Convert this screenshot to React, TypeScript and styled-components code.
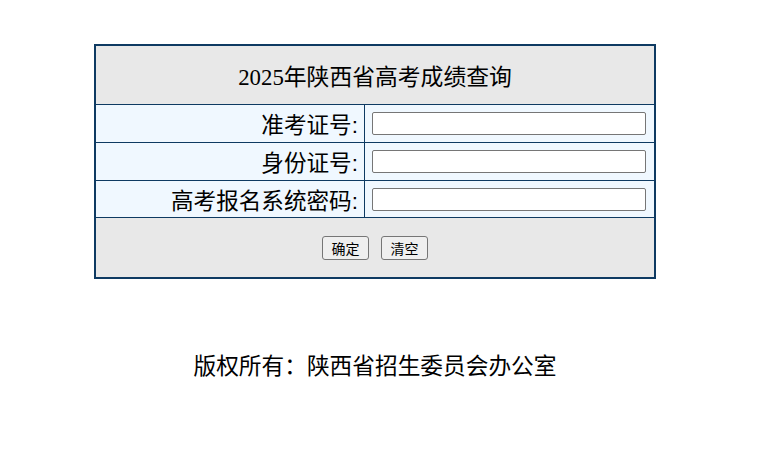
import React from 'react';
import styled, { createGlobalStyle } from 'styled-components';

const GlobalStyle = createGlobalStyle`
  body {
    margin: 0;
    background: #ffffff;
    font-family: "Liberation Sans", "Noto Sans CJK SC", sans-serif;
    color: #000000;
  }
`;

const rows = [
  { label: '准考证号:', name: 'ksh', type: 'text', height: 37 },
  { label: '身份证号:', name: 'sfzh', type: 'text', height: 37 },
  { label: '高考报名系统密码:', name: 'mm', type: 'password', height: 36 },
];

const App = () => {
  return (
    <Page>
      <GlobalStyle />
      <QueryForm onSubmit={(e) => e.preventDefault()}>
        <Title>2025年陕西省高考成绩查询</Title>
        {rows.map((r) => (
          <React.Fragment key={r.name}>
            <Label h={r.height}>{r.label}</Label>
            <Field h={r.height}>
              <Input type={r.type} name={r.name} />
            </Field>
          </React.Fragment>
        ))}
        <Actions>
          <Button type="submit">确定</Button>
          <Button type="reset">清空</Button>
        </Actions>
      </QueryForm>
      <Copyright>版权所有：陕西省招生委员会办公室</Copyright>
    </Page>
  );
};

const Page = styled.div`
  width: 750px;
  padding-top: 44px;
  display: flex;
  flex-direction: column;
  align-items: center;
`;

const QueryForm = styled.form`
  width: 562px;
  box-sizing: border-box;
  border: 2px solid #0e3a62;
  display: grid;
  grid-template-columns: 269px 1fr;
`;

const Title = styled.div`
  grid-column: 1 / -1;
  height: 58px;
  border-bottom: 1px solid #0e3a62;
  background: #e8e8e8;
  display: flex;
  align-items: center;
  justify-content: center;
  font-family: "Liberation Serif", "Noto Sans CJK SC", serif;
  font-size: 22.8px;
`;

const Label = styled.div<{ h: number }>`
  height: ${(p) => p.h}px;
  border-bottom: 1px solid #0e3a62;
  border-right: 1px solid #0e3a62;
  background: #f0f8ff;
  display: flex;
  align-items: center;
  justify-content: flex-end;
  padding-right: 6px;
  font-size: 22.6px;
`;

const Field = styled.div<{ h: number }>`
  height: ${(p) => p.h}px;
  border-bottom: 1px solid #0e3a62;
  background: #f0f8ff;
  display: flex;
  align-items: center;
  padding-left: 7px;
`;

const Input = styled.input`
  box-sizing: border-box;
  width: 274px;
  height: 23px;
  margin: 0;
  border: 1px solid #767676;
  border-radius: 2px;
  background: #ffffff;
`;

const Actions = styled.div`
  grid-column: 1 / -1;
  height: 59px;
  background: #e8e8e8;
  display: flex;
  align-items: center;
  justify-content: center;
  gap: 12px;
`;

const Button = styled.button`
  box-sizing: border-box;
  width: 47px;
  height: 24px;
  padding: 0;
  border: 1px solid #767676;
  border-radius: 3px;
  background: #efefef;
  font-family: "Noto Sans CJK SC", sans-serif;
  font-size: 14px;
  line-height: 22px;
  color: #000000;
`;

const Copyright = styled.div`
  margin-top: 72px;
  line-height: 30px;
  font-size: 22.7px;
`;

export default App;
